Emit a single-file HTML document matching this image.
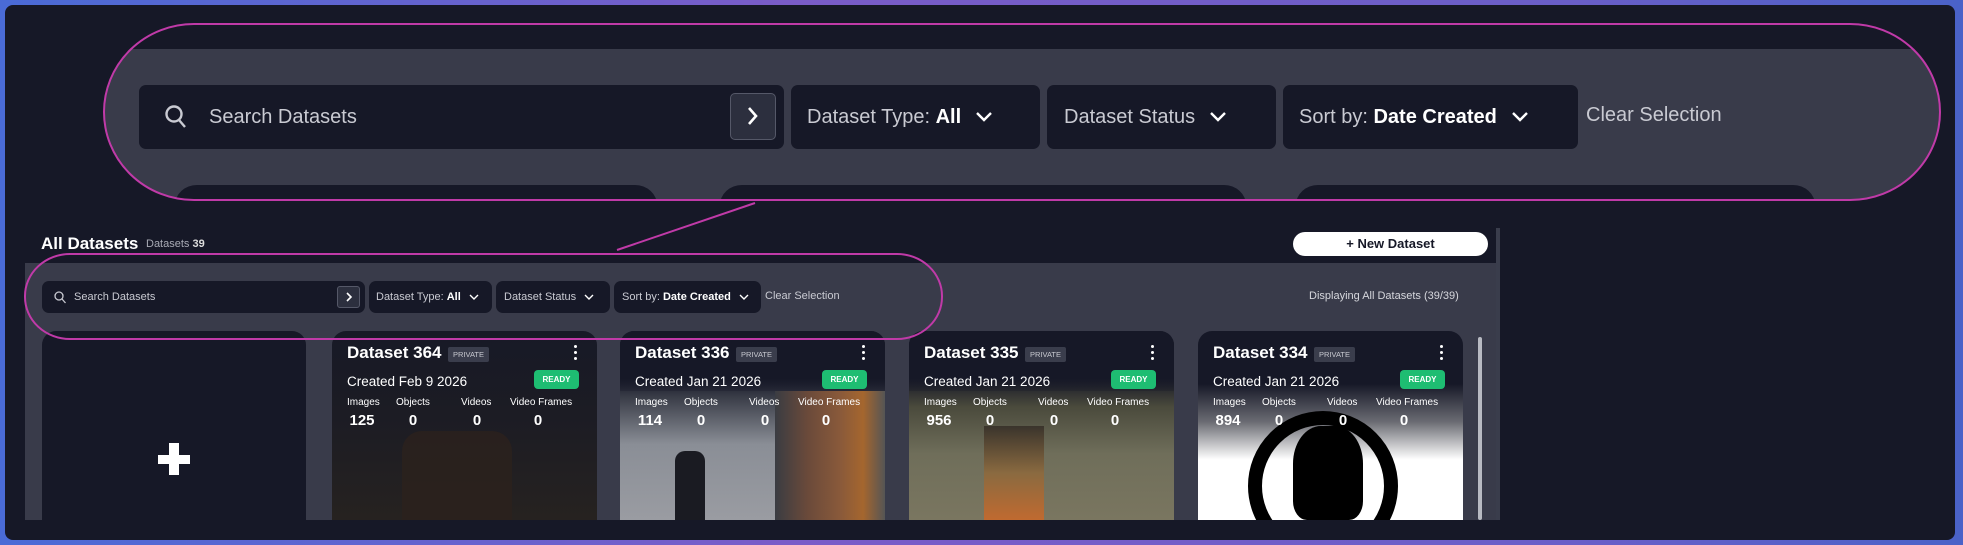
<!DOCTYPE html>
<html><head><meta charset="utf-8"><style>
*{margin:0;padding:0;box-sizing:border-box}
body{width:1963px;height:545px;overflow:hidden;background:linear-gradient(90deg,#4a6bd6,#7a5cc8 40%,#6a5ec8 80%,#4a62c8);font-family:"Liberation Sans",sans-serif;position:relative}
.frame{position:absolute;left:5px;top:5px;width:1950px;height:535px;background:#161827;border-radius:8px}
.a{position:absolute}
.box{position:absolute;background:#161827;border-radius:7px;color:#c9cad2;display:flex;align-items:center}
.card{position:absolute;top:331px;width:265px;height:189px;border-radius:14px 14px 0 0;overflow:hidden;background:#1a1c2b}
.card .t{position:absolute;left:15px;top:12px;font-size:17px;font-weight:bold;color:#fff}
.card .p{position:absolute;left:116px;top:16px;width:41px;height:15px;background:#3a3d4c;color:#c8c9d0;font-size:7.5px;line-height:15px;text-align:center;border-radius:2px}
.card .k{position:absolute;left:242px;top:14px;width:4px;height:18px}
.card .k i{display:block;width:3px;height:3px;background:#fff;border-radius:50%;margin:0 0 3px}
.card .c{position:absolute;left:15px;top:43px;font-size:13.5px;color:#fff}
.card .r{position:absolute;right:18px;top:39px;width:45px;height:19px;background:#1ebd72;color:#fff;font-size:8px;font-weight:bold;line-height:19px;text-align:center;border-radius:4px}
.card .l{position:absolute;top:66px;font-size:10px;color:#fff}
.card .v{position:absolute;top:81px;font-size:15px;font-weight:bold;color:#fff;text-align:center}
</style></head><body>
<div class="frame"></div>

<svg class="a" style="left:0;top:0" width="1963" height="545">
<defs><clipPath id="cp"><rect x="104" y="24" width="1836" height="176" rx="90" ry="88"/></clipPath></defs>
<g clip-path="url(#cp)">
<rect x="0" y="49" width="1963" height="160" fill="#393b4a"/>
<rect x="175" y="185" width="482" height="40" rx="22" fill="#161827"/>
<rect x="720" y="185" width="526" height="40" rx="22" fill="#161827"/>
<rect x="1296" y="185" width="519" height="40" rx="22" fill="#161827"/>
</g>
</svg>

<!-- big filter bar -->
<div class="box" style="left:139px;top:85px;width:645px;height:64px;font-size:20px">
<svg style="margin-left:25px" width="24" height="26" viewBox="0 0 24 26"><circle cx="10" cy="10" r="7.5" fill="none" stroke="#c9cad2" stroke-width="2.4"/><path d="M15 16l6 7" stroke="#c9cad2" stroke-width="2.4"/></svg>
<span style="margin-left:21px">Search Datasets</span></div>
<div class="a" style="left:730px;top:93px;width:46px;height:47px;background:#2c2f3e;border:1.5px solid #555868;border-radius:5px"><svg width="43" height="44"><path d="M18 14l7 8-7 8" fill="none" stroke="#fff" stroke-width="2.6"/></svg></div>
<div class="box" style="left:791px;top:85px;width:249px;height:64px;font-size:20px"><span style="margin-left:16px">Dataset Type: <b style="color:#fff">All</b></span><svg style="margin-left:14px" width="18" height="12"><path d="M2 2l7 7 7-7" fill="none" stroke="#fff" stroke-width="2.4"/></svg></div>
<div class="box" style="left:1047px;top:85px;width:229px;height:64px;font-size:20px"><span style="margin-left:17px">Dataset Status</span><svg style="margin-left:14px" width="18" height="12"><path d="M2 2l7 7 7-7" fill="none" stroke="#fff" stroke-width="2.4"/></svg></div>
<div class="box" style="left:1283px;top:85px;width:295px;height:64px;font-size:20px"><span style="margin-left:16px">Sort by: <b style="color:#fff">Date Created</b></span><svg style="margin-left:14px" width="18" height="12"><path d="M2 2l7 7 7-7" fill="none" stroke="#fff" stroke-width="2.4"/></svg></div>
<div class="a" style="left:1586px;top:104px;font-size:20px;color:#c9cad2">Clear Selection</div>

<!-- page header -->
<div class="a" style="left:41px;top:234px;font-size:17px;font-weight:bold;color:#fff">All Datasets</div>
<div class="a" style="left:146px;top:238px;font-size:11px;color:#a9abb5">Datasets <b style="color:#ddd">39</b></div>
<div class="a" style="left:1293px;top:232px;width:195px;height:24px;background:#fff;border-radius:12px;color:#161827;font-size:13px;font-weight:bold;text-align:center;line-height:24px">+ New Dataset</div>
<div class="a" style="left:1496px;top:228px;width:4px;height:292px;background:#3a3d4c"></div>

<!-- panel -->
<div class="a" style="left:25px;top:263px;width:1471px;height:257px;background:#393b4a"></div>
<div class="box" style="left:42px;top:281px;width:323px;height:32px;font-size:11px"><svg style="margin-left:12px" width="12" height="13"><circle cx="5" cy="5" r="4" fill="none" stroke="#c9cad2" stroke-width="1.3"/><path d="M8 8l3.5 4" stroke="#c9cad2" stroke-width="1.3"/></svg><span style="margin-left:8px">Search Datasets</span></div>
<div class="a" style="left:337px;top:286px;width:23px;height:22px;background:#2c2f3e;border:1px solid #555868;border-radius:3px"><svg width="21" height="20"><path d="M9 6l4 4-4 4" fill="none" stroke="#fff" stroke-width="1.6"/></svg></div>
<div class="box" style="left:369px;top:281px;width:123px;height:32px;font-size:11px"><span style="margin-left:7px">Dataset Type: <b style="color:#fff">All</b></span><svg style="margin-left:8px" width="10" height="7"><path d="M1 1l4 4 4-4" fill="none" stroke="#fff" stroke-width="1.4"/></svg></div>
<div class="box" style="left:496px;top:281px;width:114px;height:32px;font-size:11px"><span style="margin-left:8px">Dataset Status</span><svg style="margin-left:8px" width="10" height="7"><path d="M1 1l4 4 4-4" fill="none" stroke="#fff" stroke-width="1.4"/></svg></div>
<div class="box" style="left:614px;top:281px;width:147px;height:32px;font-size:11px"><span style="margin-left:8px">Sort by: <b style="color:#fff">Date Created</b></span><svg style="margin-left:8px" width="10" height="7"><path d="M1 1l4 4 4-4" fill="none" stroke="#fff" stroke-width="1.4"/></svg></div>
<div class="a" style="left:765px;top:290px;font-size:11px;color:#c9cad2">Clear Selection</div>
<div class="a" style="left:1309px;top:290px;font-size:11px;color:#d6d7dd">Displaying All Datasets (39/39)</div>
<div class="a" style="left:1478px;top:337px;width:4px;height:183px;background:#b8bac2;border-radius:2px"></div>

<!-- new card -->
<div class="card" style="left:42px;width:264px;background:#161827">
<div class="a" style="left:116px;top:124px;width:32px;height:9px;background:#fff"></div>
<div class="a" style="left:127px;top:112px;width:10px;height:32px;background:#fff"></div>
</div>

<div class="card" style="left:332px;background:linear-gradient(#171926 0%,#1c1c24 45%,#262220 100%)">
<div class="a" style="left:70px;top:100px;width:110px;height:89px;background:#2c221d;border-radius:20px 20px 0 0;opacity:.8"></div>
<div class="t">Dataset 364</div><div class="p">PRIVATE</div><div class="k"><i></i><i></i><i></i></div>
<div class="c">Created Feb 9 2026</div><div class="r">READY</div>
<div class="l" style="left:15px">Images</div><div class="l" style="left:64px">Objects</div><div class="l" style="left:129px">Videos</div><div class="l" style="left:178px">Video Frames</div>
<div class="v" style="left:15px;width:30px">125</div><div class="v" style="left:64px;width:34px">0</div><div class="v" style="left:129px;width:32px">0</div><div class="v" style="left:178px;width:56px">0</div>
</div>

<div class="card" style="left:620px;background:linear-gradient(#161827 0%,#161827 25%,#3a3d48 35%,#8a8e96 60%,#9a9ca2 100%)">
<div class="a" style="left:155px;top:60px;width:110px;height:129px;background:linear-gradient(90deg,#3a3c42 0%,#6b4a3a 30%,#8a5a3a 60%,#a5662e 80%,#555 100%)"></div>
<div class="a" style="left:55px;top:120px;width:30px;height:69px;background:#1a1b22;border-radius:10px 10px 0 0"></div>
<div class="a" style="left:0;top:0;width:265px;height:60px;background:linear-gradient(#161827 60%,rgba(22,24,39,.3))"></div>
<div class="t">Dataset 336</div><div class="p">PRIVATE</div><div class="k"><i></i><i></i><i></i></div>
<div class="c">Created Jan 21 2026</div><div class="r">READY</div>
<div class="l" style="left:15px">Images</div><div class="l" style="left:64px">Objects</div><div class="l" style="left:129px">Videos</div><div class="l" style="left:178px">Video Frames</div>
<div class="v" style="left:15px;width:30px">114</div><div class="v" style="left:64px;width:34px">0</div><div class="v" style="left:129px;width:32px">0</div><div class="v" style="left:178px;width:56px">0</div>
</div>

<div class="card" style="left:909px;background:linear-gradient(#161827 0%,#161827 25%,#4a4a3c 40%,#6f6e5a 65%,#7a7660 100%)">
<div class="a" style="left:75px;top:95px;width:60px;height:94px;background:linear-gradient(#3a342c,#8a6a40 50%,#c06a30)"></div>
<div class="a" style="left:0;top:0;width:265px;height:60px;background:linear-gradient(#161827 60%,rgba(22,24,39,.3))"></div>
<div class="t">Dataset 335</div><div class="p">PRIVATE</div><div class="k"><i></i><i></i><i></i></div>
<div class="c">Created Jan 21 2026</div><div class="r">READY</div>
<div class="l" style="left:15px">Images</div><div class="l" style="left:64px">Objects</div><div class="l" style="left:129px">Videos</div><div class="l" style="left:178px">Video Frames</div>
<div class="v" style="left:15px;width:30px">956</div><div class="v" style="left:64px;width:34px">0</div><div class="v" style="left:129px;width:32px">0</div><div class="v" style="left:178px;width:56px">0</div>
</div>

<div class="card" style="left:1198px;background:linear-gradient(#161827 0%,#161827 28%,#6a6b72 48%,#fff 68%,#fff 100%)">
<div class="a" style="left:50px;top:80px;width:150px;height:150px;border-radius:50%;border:14px solid #000"></div>
<div class="a" style="left:95px;top:95px;width:70px;height:94px;background:#000;border-radius:40% 40% 20% 20%"></div>
<div class="t">Dataset 334</div><div class="p">PRIVATE</div><div class="k"><i></i><i></i><i></i></div>
<div class="c">Created Jan 21 2026</div><div class="r">READY</div>
<div class="l" style="left:15px">Images</div><div class="l" style="left:64px">Objects</div><div class="l" style="left:129px">Videos</div><div class="l" style="left:178px">Video Frames</div>
<div class="v" style="left:15px;width:30px">894</div><div class="v" style="left:64px;width:34px">0</div><div class="v" style="left:129px;width:32px">0</div><div class="v" style="left:178px;width:56px">0</div>
</div>

<!-- magenta annotations -->
<svg class="a" style="left:0;top:0" width="1963" height="545">
<rect x="104" y="24" width="1836" height="176" rx="90" ry="88" fill="none" stroke="#c03aa8" stroke-width="2"/>
<path d="M755 203L617 250" stroke="#c03aa8" stroke-width="2"/>
<rect x="25" y="254" width="917" height="85" rx="45" ry="42" fill="none" stroke="#c03aa8" stroke-width="2"/>
</svg>
</body></html>
